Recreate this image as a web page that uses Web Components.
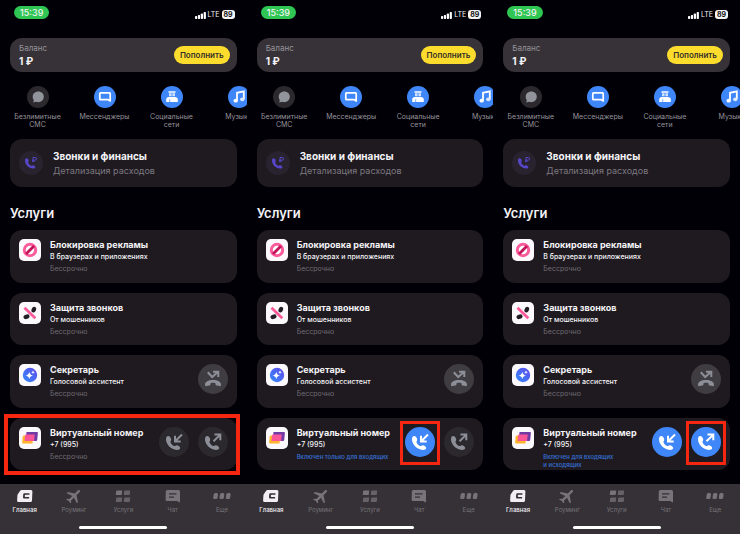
<!DOCTYPE html>
<html lang="ru">
<head>
<meta charset="utf-8">
<meta name="viewport" content="width=device-width, initial-scale=1">
<title>Услуги</title>
<style>
    body {
        margin: 0;
        background: #010006;
        font-family: Inter, "Liberation Sans", sans-serif;
        color: #f4f3f6;
    }

    main {
        display: grid;
        grid-template-columns: repeat(3, 1fr);
        min-height: 100vh;
    }
</style>
</head>
<body>
<main>
    <phone-screen>
        <service-card slot="number" highlight heading="Виртуальный номер" text="+7 (995)" note="Бессрочно" icon="cards">
            <call-button icon="incoming" label="Входящие"></call-button>
            <call-button icon="outgoing" label="Исходящие"></call-button>
        </service-card>
    </phone-screen>
    <phone-screen>
        <service-card slot="number" active heading="Виртуальный номер" text="+7 (995)" note="Включен только для входящих" icon="cards">
            <call-button icon="incoming" label="Входящие" active highlight></call-button>
            <call-button icon="outgoing" label="Исходящие"></call-button>
        </service-card>
    </phone-screen>
    <phone-screen>
        <service-card slot="number" active heading="Виртуальный номер" text="+7 (995)" note="Включен для входящих&#10;и исходящих" icon="cards">
            <call-button icon="incoming" label="Входящие" active></call-button>
            <call-button icon="outgoing" label="Исходящие" active highlight></call-button>
        </service-card>
    </phone-screen>
</main>

<script>
const HANDSET = '<path fill="currentColor" d="M7 12.200C7 10 8.200 8.800 9.500 9c1.600.300 2.700 2.200 2.700 3.700 0 1-.9 1.700-.7 2.500.5 1.700 2 3.200 3.700 3.800.9.300 1.500-.9 2.600-.8 1.600.2 3.300 1.300 3.400 2.700.1 1.300-1.500 2-3.400 2C12 22.500 7 17.500 7 12.200Z"/>';

// [viewBox width, viewBox height, markup]
const ICONS = {
    bubble: [22, 22, '<path fill="#92949c" d="M11.300 5.500c3.300 0 5.500 2.300 5.500 5.300s-2.300 5.400-5.600 5.400c-.8 0-1.500-.1-2.100-.4l-2.800.6.500-2.300c-.7-.8-1.100-1.900-1.100-3.200 0-3 2.300-5.400 5.600-5.400Z"/>'],
    message: [22, 22, '<path fill="none" stroke="#fff" stroke-width="1.700" stroke-linejoin="round" d="M6.600 6.800h8.800q.8 0 .8.800v7.300l-2-1.200H6.600q-.8 0-.8-.8V7.600q0-.8.8-.8Z"/>'],
    people: [22, 22, '<path fill="#fff" opacity=".75" d="M7.500 5h7v2h-7zM8 7.300h2.600v3H8zM11.400 7.300H14v3h-2.600z"/><path fill="#fff" d="M5.200 16v-2.500c0-1.600 1-2.500 2.600-2.500h6.200c1.700 0 2.800.9 2.800 2.500V16Z"/><path stroke="#3f86f8" stroke-width=".7" d="M8.700 13.300V16"/>'],
    music: [22, 22, '<path fill="none" stroke="#fff" stroke-width="1.800" d="M9 14.500V6.800l6.800-1.500v7.800"/><ellipse cx="7.700" cy="14.700" rx="2.200" ry="1.900" fill="#fff"/><ellipse cx="14.300" cy="13.300" rx="2.200" ry="1.900" fill="#dbe8ff"/>'],
    finance: [24, 24, '<path fill="#5646c8" d="M6 9.300c0-1.500.9-2.200 1.800-2 1.300.3 2 1.500 1.900 2.800-.1.800-.6 1.200-.3 1.900.6 1.300 1.500 2.200 2.800 2.700.7.200 1.100-.5 1.900-.4 1.300.1 2.200 1 2.200 1.900 0 1-1 1.500-2.200 1.400C9.700 17.300 6 13.800 6 9.300Z"/><path fill="none" stroke="#5646c8" d="M14 11V6.500h2.200a1.300 1.300 0 0 1 0 2.700H13M13 10.300h2.500"/>'],
    block: [22, 22, '<circle cx="11" cy="11" r="5.700" fill="#fff" stroke="#fb5a9b" stroke-width="3"/><path stroke="#c3135b" stroke-width="2.800" d="m7 15 8-8"/>'],
    shield: [22, 22, '<ellipse cx="14.800" cy="7.600" rx="2.200" ry="2.900" transform="rotate(25 14.800 7.600)" fill="#221d24"/><ellipse cx="7.500" cy="14.800" rx="3.100" ry="2.200" transform="rotate(-20 7.500 14.800)" fill="#221d24"/><path stroke="#fb5a9b" stroke-width="2.800" d="m5.500 5.800 10.800 10.500"/>'],
    assistant: [22, 22, '<defs><linearGradient id="g" x1="0" y1="1" x2="1" y2="0"><stop stop-color="#318bff"/><stop offset="1" stop-color="#6148e8"/></linearGradient></defs><circle cx="11" cy="11" r="7.200" fill="url(#g)"/><path fill="#fff" d="M10.300 7.700q.5 3.300 3.800 3.800-3.300.5-3.800 3.800-.5-3.300-3.800-3.800 3.300-.5 3.800-3.800ZM14 6.500q.3 1.500 1.800 1.800-1.500.3-1.800 1.800-.3-1.500-1.800-1.800 1.500-.3 1.800-1.800Z"/>'],
    cards: [22, 22, '<path fill="#713aa4" d="M7.500 5H18q1 0 .9 1l-.7 7q-.2 1-1.200 1H6.500z"/><path fill="#ffb42b" d="M5 8.500h9L13.500 16.500H4q-1 0-.9-1l.6-6q.2-1 1.300-1Z"/><path fill="#fb5599" d="M7.300 7.500h8.400l-.6 6.500H5.600l.5-5.500q.1-1 1.200-1Z"/>'],
    incoming: [30, 30, HANDSET + '<path fill="none" stroke="currentColor" stroke-width="2" d="m23 7.500-6.300 6.200M16 8.700v5.700h5.700"/>'],
    outgoing: [30, 30, HANDSET + '<path fill="none" stroke="currentColor" stroke-width="2" d="m15.500 14.300 6.300-6.200M16.500 7.500h5.800v5.700"/>'],
    forward: [30, 30, '<path fill="none" stroke="currentColor" stroke-width="2" d="m9.800 8.200 4.400 4.800 5.600-5M15 7.700h5.300V13"/><path fill="currentColor" d="M15 16c4.700 0 8 2 8 4.400 0 1.300-.5 1.900-1.500 1.700l-2.700-.6c-.9-.2-1.300-.7-1.300-1.600v-.7c-1.600-.5-3.400-.5-5 0v.7c0 .9-.4 1.400-1.300 1.600l-2.700.6c-1 .2-1.500-.4-1.500-1.700C7 18 10.300 16 15 16Z"/>'],
    home: [18, 14, '<path fill="currentColor" fill-rule="evenodd" d="M5.500 1H15q1.500 0 1.400 1.500L16 11.500q-.1 1.500-1.600 1.500H2.500Q1 13 1.100 11.500l.3-5q.1-1 .7-1.700L4 1.900Q4.700 1 5.500 1Zm3 3.200q-1.200 0-1.300 1.200l-.2 2.900q-.1 1.200 1.100 1.200h5V8H9.500q-.8 0-.7-.8V6.500q.1-.8.900-.8h3.700l.1-1.500Z"/>'],
    plane: [18, 14, '<path fill="currentColor" transform="translate(9 7) rotate(45) scale(.8) translate(-12 -12)" d="M21 16v-2l-7.500-5V3.500c0-.9-.6-1.500-1.500-1.500s-1.500.6-1.500 1.500V9L3 14v2l7.500-2.500V19L8 20.800V22l4-1 4 1v-1.200L13.500 19v-5.500z"/>'],
    grid: [18, 14, '<path fill="currentColor" d="M3.200 1.500h5l-.3 3.500q-.1 1-1.100 1H1.800l.3-3.500q.1-1 1.100-1Z"/><path fill="currentColor" opacity=".75" d="M11.200 1.500h5l-.3 3.500q-.1 1-1.100 1H9.800l.3-3.500q.1-1 1.100-1ZM3.200 8.500h5l-.3 3.500q-.1 1-1.100 1H1.800l.3-3.500q.1-1 1.100-1ZM11.200 8.500h5l-.3 3.500q-.1 1-1.100 1H9.800l.3-3.500q.1-1 1.100-1Z"/>'],
    chat: [18, 14, '<path fill="currentColor" fill-rule="evenodd" d="M3.300 1h11.200q1.500 0 1.500 1.500V13.500l-3-1.500H3Q1.500 12 1.600 10.500l.2-8Q1.900 1 3.300 1ZM5 4.200v1.300h7.500V4.200ZM5 7.500v1.300h5V7.500Z"/>'],
    more: [18, 14, '<g fill="currentColor"><path d="M2.200 4h1.500q1.500 0 1.300 1.500l-.4 3Q4.400 10 3 10H1.500Q0 10 .2 8.500l.5-3Q.9 4 2.200 4Z"/><path d="M8.500 4H10q1.500 0 1.300 1.500l-.4 3q-.2 1.500-1.600 1.500H7.800Q6.300 10 6.500 8.500l.5-3Q7.200 4 8.500 4Z"/><path d="M14.800 4h1.500q1.500 0 1.300 1.500l-.4 3q-.2 1.500-1.600 1.500h-1.500q-1.500 0-1.300-1.500l.5-3Q13.500 4 14.800 4Z"/></g>'],
    signal: [11, 9, '<g fill="#fff"><rect y="6" width="2.200" height="3" rx=".7"/><rect x="2.900" y="5" width="2.200" height="4" rx=".7"/><rect x="5.800" y="3.500" width="2.200" height="5.500" rx=".7"/><rect x="8.700" y="2" width="2.200" height="7" rx=".7"/></g>']
};

class AppIcon extends HTMLElement {
    connectedCallback() {
        const [w, h, body] = ICONS[this.getAttribute('name')];
        this.attachShadow({ mode: 'open' }).innerHTML = `
            <style>
                :host { display: block; flex: none; }
                svg { display: block; }
            </style>
            <svg width="${w}" height="${h}" viewBox="0 0 ${w} ${h}" aria-hidden="true">${body}</svg>
        `;
    }
}

class StatusBar extends HTMLElement {
    connectedCallback() {
        this.attachShadow({ mode: 'open' }).innerHTML = `
            <style>
                :host {
                    display: flex;
                    justify-content: space-between;
                    align-items: flex-start;
                    height: 32px;
                    padding: 6px 12px 0 14px;
                }
                time {
                    padding: 0 6px;
                    border-radius: 7px;
                    background: #2fc653;
                    font-size: 9px;
                    font-weight: 500;
                    line-height: 13px;
                }
                .network {
                    display: flex;
                    align-items: center;
                    gap: 2px;
                    padding-top: 4px;
                    font-size: 7px;
                    line-height: 9px;
                }
                .battery {
                    padding: 0 2px;
                    border-radius: 3px;
                    background: #f5f5f5;
                    color: #111;
                    font-weight: 700;
                }
            </style>
            <time>15:39</time>
            <div class="network">
                <app-icon name="signal"></app-icon>
                <span>LTE</span>
                <span class="battery">89</span>
            </div>
        `;
    }
}

class BalanceCard extends HTMLElement {
    connectedCallback() {
        this.attachShadow({ mode: 'open' }).innerHTML = `
            <style>
                :host {
                    display: flex;
                    align-items: center;
                    justify-content: space-between;
                    height: 34px;
                    margin: 0 10px;
                    padding: 0 7px 0 9px;
                    border-radius: 12px;
                    background: #363237;
                    box-sizing: border-box;
                }
                .label {
                    color: #96929a;
                    font-size: 8px;
                    line-height: 12px;
                }
                .sum {
                    font-size: 10px;
                    font-weight: 700;
                    line-height: 14px;
                }
                button {
                    height: 18px;
                    padding: 0 6px;
                    border: 0;
                    border-radius: 9px;
                    background: #fddc2e;
                    color: #332f28;
                    font: 600 8px/18px Inter, sans-serif;
                }
            </style>
            <div>
                <div class="label">Баланс</div>
                <div class="sum">1 ₽</div>
            </div>
            <button type="button">Пополнить</button>
        `;
    }
}

class StoryItem extends HTMLElement {
    connectedCallback() {
        this.attachShadow({ mode: 'open' }).innerHTML = `
            <style>
                :host {
                    display: block;
                    flex: none;
                    width: 67px;
                }
                a {
                    display: flex;
                    flex-direction: column;
                    align-items: center;
                    gap: 5px;
                    color: #96949b;
                    font-size: 7px;
                    line-height: 8px;
                    text-align: center;
                    text-decoration: none;
                }
                app-icon {
                    border-radius: 50%;
                    background: #3f86f8;
                }
                :host([muted]) app-icon { background: #2b292e; }
                span { width: 54px; }
            </style>
            <a href="#">
                <app-icon name="${this.getAttribute('icon')}"></app-icon>
                <span><slot></slot></span>
            </a>
        `;
    }
}

class FinanceCard extends HTMLElement {
    connectedCallback() {
        this.attachShadow({ mode: 'open' }).innerHTML = `
            <style>
                :host { display: block; margin: 10px 10px 0; }
                a {
                    display: flex;
                    align-items: center;
                    gap: 10px;
                    height: 48px;
                    padding: 0 9px;
                    border-radius: 12px;
                    background: #1f1a20;
                    color: inherit;
                    text-decoration: none;
                    box-sizing: border-box;
                }
                app-icon { border-radius: 50%; background: #29232f; }
                strong, span { display: block; }
                strong { font-size: 10px; font-weight: 700; line-height: 15px; }
                span { color: #7d7981; font-size: 9px; line-height: 14px; }
            </style>
            <a href="#">
                <app-icon name="finance"></app-icon>
                <div>
                    <strong>Звонки и финансы</strong>
                    <span>Детализация расходов</span>
                </div>
            </a>
        `;
    }
}

class CallButton extends HTMLElement {
    connectedCallback() {
        this.attachShadow({ mode: 'open' }).innerHTML = `
            <style>
                :host { display: block; position: relative; flex: none; }
                button {
                    display: block;
                    padding: 0;
                    border: 0;
                    border-radius: 50%;
                    background: #2c292e;
                    color: #8d8f98;
                }
                :host([light]) button { background: #403d42; }
                :host([active]) button { background: #3f86f8; color: #fff; }
                :host([highlight])::after {
                    content: "";
                    position: absolute;
                    inset: -6px -5px -8px;
                    border: 3px solid #f52711;
                }
            </style>
            <button type="button" aria-label="${this.getAttribute('label')}">
                <app-icon name="${this.getAttribute('icon')}"></app-icon>
            </button>
        `;
    }
}

class ServiceCard extends HTMLElement {
    connectedCallback() {
        this.attachShadow({ mode: 'open' }).innerHTML = `
            <style>
                :host {
                    display: flex;
                    position: relative;
                    gap: 9px;
                    padding: 9px 9px 0;
                    border-radius: 12px;
                    background: #1f1a20;
                }
                :host([highlight])::after {
                    content: "";
                    position: absolute;
                    inset: -4px -3px -5px -6px;
                    border: 4px solid #f52711;
                }
                app-icon {
                    align-self: flex-start;
                    border-radius: 5px;
                    background: #fbf9fc;
                }
                .info { flex: 1; min-width: 0; }
                h3, p { margin: 0; white-space: pre; }
                h3 { font-size: 9px; font-weight: 700; line-height: 12px; }
                p { font-size: 7px; font-weight: 500; line-height: 11px; }
                .note {
                    margin-top: 3px;
                    color: #6f6b73;
                    font-weight: 400;
                    line-height: 8px;
                }
                :host([active]) .note { color: #3672d8; font-size: 6px; font-weight: 500; }
                .actions { display: flex; gap: 9px; align-items: flex-start; }
            </style>
            <app-icon name="${this.getAttribute('icon')}"></app-icon>
            <div class="info">
                <h3>${this.getAttribute('heading')}</h3>
                <p>${this.getAttribute('text')}</p>
                <p class="note">${this.getAttribute('note')}</p>
            </div>
            <div class="actions"><slot></slot></div>
        `;
    }
}

class TabBar extends HTMLElement {
    connectedCallback() {
        const tabs = [['home', 'Главная'], ['plane', 'Роуминг'], ['grid', 'Услуги'], ['chat', 'Чат'], ['more', 'Еще']];
        this.attachShadow({ mode: 'open' }).innerHTML = `
            <style>
                :host {
                    display: block;
                    height: 50px;
                    background: #353136;
                    box-sizing: border-box;
                    padding-top: 5px;
                }
                nav { display: flex; height: 37px; }
                a {
                    display: flex;
                    flex: 1;
                    flex-direction: column;
                    align-items: center;
                    gap: 2px;
                    color: #77737a;
                    font-size: 6px;
                    line-height: 9px;
                    text-decoration: none;
                }
                a[aria-current] { color: #f1eff3; font-weight: 500; }
                .handle {
                    width: 88px;
                    height: 3px;
                    margin: 0 auto;
                    border-radius: 2px;
                    background: #fff;
                }
            </style>
            <nav>
                ${tabs.map(([icon, label], i) => `
                    <a href="#" ${i === 0 ? 'aria-current="page"' : ''}><app-icon name="${icon}"></app-icon>${label}</a>
                `).join('')}
            </nav>
            <div class="handle"></div>
        `;
    }
}

class PhoneScreen extends HTMLElement {
    connectedCallback() {
        this.attachShadow({ mode: 'open' }).innerHTML = `
            <style>
                :host {
                    display: flex;
                    flex-direction: column;
                    min-width: 0;
                }
                .stories {
                    display: flex;
                    height: 43px;
                    margin-top: 14px;
                    padding-left: 4px;
                    overflow: hidden;
                }
                h2 {
                    margin: 18px 10px 9px;
                    font-size: 13px;
                    font-weight: 600;
                    line-height: 16px;
                }
                .services {
                    display: grid;
                    flex: 1;
                    grid-template-columns: minmax(0, 1fr);
                    grid-auto-rows: 1fr;
                    gap: 10px;
                    margin: 0 10px 14px;
                }
            </style>
            <status-bar></status-bar>
            <balance-card></balance-card>
            <div class="stories">
                <story-item icon="bubble" muted>Безлимитные СМС</story-item>
                <story-item icon="message">Мессенджеры</story-item>
                <story-item icon="people">Социальные сети</story-item>
                <story-item icon="music">Музыка</story-item>
            </div>
            <finance-card></finance-card>
            <h2>Услуги</h2>
            <div class="services">
                <service-card heading="Блокировка рекламы" text="В браузерах и приложениях" note="Бессрочно" icon="block"></service-card>
                <service-card heading="Защита звонков" text="От мошенников" note="Бессрочно" icon="shield"></service-card>
                <service-card heading="Секретарь" text="Голосовой ассистент" note="Бессрочно" icon="assistant">
                    <call-button icon="forward" label="Переадресация" light></call-button>
                </service-card>
                <slot name="number"></slot>
            </div>
            <tab-bar></tab-bar>
        `;
    }
}

customElements.define('app-icon', AppIcon);
customElements.define('status-bar', StatusBar);
customElements.define('balance-card', BalanceCard);
customElements.define('story-item', StoryItem);
customElements.define('finance-card', FinanceCard);
customElements.define('call-button', CallButton);
customElements.define('service-card', ServiceCard);
customElements.define('tab-bar', TabBar);
customElements.define('phone-screen', PhoneScreen);
</script>
</body>
</html>
